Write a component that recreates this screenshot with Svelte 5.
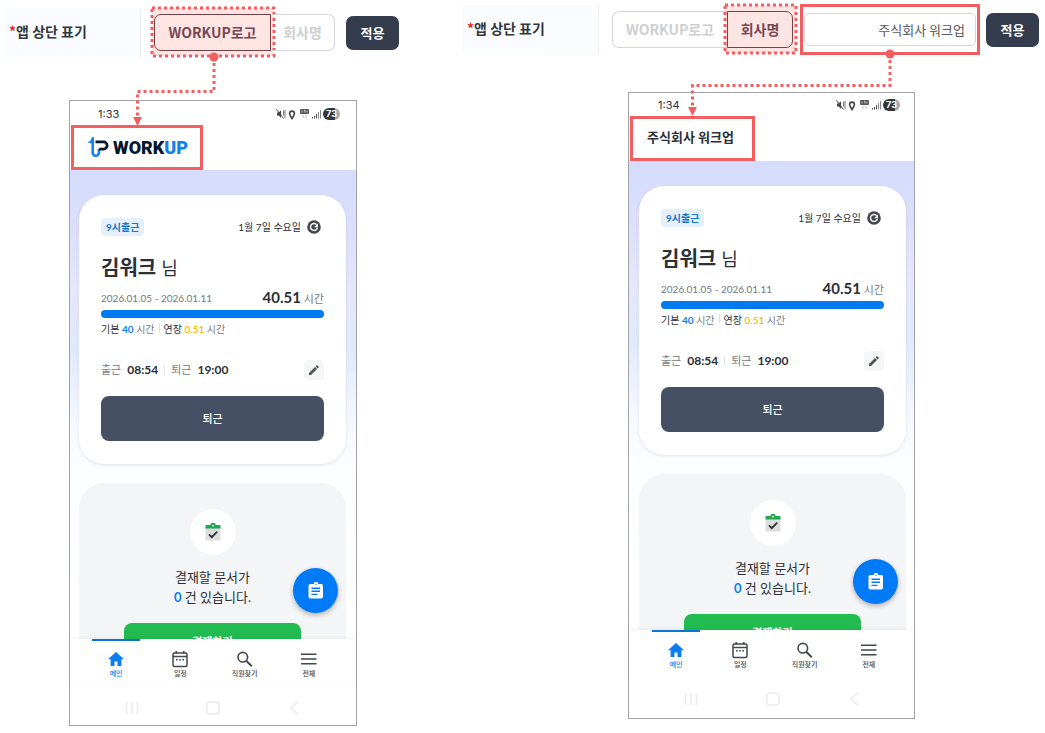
<script lang="ts">
	type Panel = {
		id: string;
		selected: 'logo' | 'name';
		time: string;
		line: string;
		dot: [number, number];
		arrow: [number, number];
	};

	const company = '주식회사 워크업';

	const panels: Panel[] = [
		{
			id: 'left',
			selected: 'logo',
			time: '1:33',
			line: 'M214 63V91.5H137.5V117',
			dot: [214, 57],
			arrow: [137.5, 117]
		},
		{
			id: 'right',
			selected: 'name',
			time: '1:34',
			line: 'M432 60V85.5H234.5V107',
			dot: [432, 54],
			arrow: [234.5, 107]
		}
	];

	const tabs = [
		{ icon: 'home', label: '메인' },
		{ icon: 'calendar', label: '일정' },
		{ icon: 'search', label: '직원찾기' },
		{ icon: 'menu', label: '전체' }
	];
</script>

{#snippet marker()}
	<svg class="marker" aria-hidden="true">
		<rect x="0" y="0" width="100%" height="100%" />
	</svg>
{/snippet}

{#snippet tabIcon(name: string)}
	<svg class="tab-icon" viewBox="0 0 18 18" aria-hidden="true">
		{#if name === 'home'}
			<path d="M9 2 1 9.2h2.6V16h3.9v-4.6h3V16h3.9V9.2H17z" fill="currentColor" />
		{:else if name === 'calendar'}
			<rect x="2" y="3" width="14" height="13.5" rx="1.5" fill="none" stroke="currentColor" stroke-width="1.5" />
			<path d="M2 6.6h14M5.2 1v2.5M12.8 1v2.5" stroke="currentColor" stroke-width="1.5" />
			<path d="M5 9.8h1.6M8.2 9.8h1.6M11.4 9.8H13" stroke="currentColor" stroke-width="1.6" />
		{:else if name === 'search'}
			<circle cx="6.8" cy="7.2" r="4.8" fill="none" stroke="currentColor" stroke-width="1.6" />
			<path d="m10.2 10.7 5.6 5.5" stroke="currentColor" stroke-width="1.9" />
		{:else}
			<path d="M1 4.3h15.500M1 9h15.500M1 13.700h15.500" stroke="currentColor" stroke-width="1.5" />
		{/if}
	</svg>
{/snippet}

{#snippet phone(panel: Panel)}
	<section class="phone">
		<div class="status">
			<span>{panel.time}</span>
			<div class="status-icons">
				<svg width="46" height="12" viewBox="0 0 46 12" aria-hidden="true">
					<path d="M1 4.5h1.600L5 2.300v7.400L2.600 7.500H1z" fill="#444" />
					<path d="m.5 1.500 7 9" stroke="#444" />
					<path d="M7.500 2.500v5M9 2v8" stroke="#666" stroke-width="0.900" />
					<path d="M16 10.500c-1.500-2.200-2.400-3.600-2.400-5a2.400 2.400 0 0 1 4.800 0c0 1.400-.9 2.800-2.400 5z" fill="none" stroke="#444" stroke-width="1.600" />
					<rect x="24" y="1" width="9" height="5" rx="1" fill="#555" />
					<path d="M26 2.500v2M28 2.500h1v2M31 2.500v2" stroke="#fff" stroke-width="0.700" fill="none" />
					<path d="M27 7v3M30 7v3" stroke="#bbb" />
					<path d="M36.500 9v1.500M38.500 8v2.500M40.500 6v4.500" stroke="#555" />
					<path d="M42.500 4v6.500M44.500 2v8.500" stroke="#888" />
				</svg>
				<span class="battery">73</span>
			</div>
		</div>

		<header class="app-bar">
			<div class="brand">
				{#if panel.selected === 'logo'}
					<svg class="logo-mark" viewBox="0 0 22 21" aria-hidden="true">
						<path d="M.3 5.800C2.800 4.800 4.300 3 4.800.3H7V6H4.200z" fill="#1480ee" />
						<path d="M5.700 3v12a3.100 3.100 0 0 0 3.100 3.700A3 3 0 0 0 11.900 15.500V12" fill="none" stroke="#1480ee" stroke-width="2.600" />
						<path d="M8.500 4.900h8a3.500 3.500 0 0 1 0 7.200h-4.400" fill="none" stroke="#06162f" stroke-width="2.700" />
					</svg>
					<span class="logo-text">WORK<b>UP</b></span>
				{:else}
					<span class="company">{company}</span>
				{/if}
			</div>
		</header>

		<div class="screen">
			<article class="card work">
				<div class="between">
					<span class="badge">9시출근</span>
					<div class="today">
						<span>1월 7일 수요일</span>
						<svg width="14" height="14" viewBox="0 0 14 14" aria-hidden="true">
							<circle cx="7" cy="7" r="6.800" fill="#43474d" />
							<path d="M9.600 4.600A3.500 3.500 0 1 0 10.400 7.800" fill="none" stroke="#fff" stroke-width="1.400" />
							<path d="M11 3.500v3.800H7.200z" fill="#fff" />
						</svg>
					</div>
				</div>

				<h2>김워크 <span>님</span></h2>

				<div class="between total">
					<span class="period">2026.01.05 - 2026.01.11</span>
					<span class="hours"><b>40.51</b> 시간</span>
				</div>
				<div class="bar"></div>
				<div class="split">
					<span>기본 <b class="blue">40</b> <i>시간</i></span>
					<span class="rule"></span>
					<span>연장 <b class="yellow">0.51</b> <i>시간</i></span>
				</div>

				<div class="between times">
					<div class="clock">
						<span>출근</span><b>08:54</b>
						<span class="rule"></span>
						<span>퇴근</span><b>19:00</b>
					</div>
					<button class="edit" aria-label="수정">
						<svg width="12" height="12" viewBox="0 0 12 12" aria-hidden="true">
							<path d="M1 11V9l6-6 2 2-6 6zM7.600 2.400 9 1l2 2-1.400 1.400z" fill="#505459" />
						</svg>
					</button>
				</div>

				<button class="leave">퇴근</button>
			</article>

			<article class="card approval">
				<div class="circle">
					<svg width="16" height="18" viewBox="0 0 16 18" aria-hidden="true">
						<rect x="0.500" y="2" width="15" height="15.500" rx="1" fill="#dcdddf" />
						<path d="M.5 5.500V3.200Q.5 2 1.700 2h3.800a2.500 2.500 0 0 1 5 0h3.800q1.200 0 1.200 1.200v2.300z" fill="#1fa94c" />
						<circle cx="8" cy="2.600" r="0.900" fill="#fff" />
						<path d="m4 11.300 2.800 2.900 5.400-5.500" fill="none" stroke="#2b2d31" stroke-width="1.700" />
					</svg>
				</div>
				<p>결재할 문서가<br /><b>0</b> 건 있습니다.</p>
				<button class="approve">결재하기</button>
			</article>

			<button class="fab" aria-label="문서">
				<svg width="18" height="18" viewBox="0 0 18 18" aria-hidden="true">
					<path d="M1.500 3.700Q1.500 2 3.200 2h3.600a2.200 2.200 0 0 1 4.400 0h3.100Q16 2 16 3.700v11.100q0 1.700-1.700 1.700H3.200q-1.700 0-1.700-1.700z" fill="#fff" />
					<circle cx="9" cy="2.300" r="0.700" fill="#007af7" />
					<path d="M4.500 6.200h8.500M4.500 9.300h8.500M4.500 12.400h6" stroke="#007af7" stroke-width="1.400" />
				</svg>
			</button>
		</div>

		<nav class="tabs">
			{#each tabs as tab, i}
				<button class="tab" class:active={i === 0}>
					{@render tabIcon(tab.icon)}
					<span>{tab.label}</span>
				</button>
			{/each}
		</nav>

		<div class="system">
			<svg viewBox="0 0 16 16" aria-hidden="true"><path d="M2.500 2v12M8 2v12M13.500 2v12" /></svg>
			<svg viewBox="0 0 16 16" aria-hidden="true"><rect x="2" y="2" width="12" height="12" rx="3" /></svg>
			<svg viewBox="0 0 16 16" aria-hidden="true"><path d="m12 1.500-7 6.500 7 6.500" /></svg>
		</div>
	</section>
{/snippet}

<main>
	{#each panels as panel}
		<div class="panel {panel.id}">
			<div class="setting">
				<div class="label" id="label-{panel.id}"><em>*</em>앱 상단 표기</div>
				<div class="segments" role="group" aria-labelledby="label-{panel.id}">
					<button class="segment" class:selected={panel.selected === 'logo'}>
						WORKUP로고
						{#if panel.selected === 'logo'}{@render marker()}{/if}
					</button>
					<button class="segment" class:selected={panel.selected === 'name'}>
						회사명
						{#if panel.selected === 'name'}{@render marker()}{/if}
					</button>
				</div>
				{#if panel.selected === 'name'}
					<div class="field">
						<input type="text" value={company} aria-label="회사명" />
					</div>
				{/if}
				<button class="apply">적용</button>
			</div>

			{@render phone(panel)}

			<svg class="connector" aria-hidden="true">
				<path d={panel.line} fill="none" stroke="#f35f60" stroke-width="3" stroke-dasharray="3 3" />
				<circle cx={panel.dot[0]} cy={panel.dot[1]} r="4.5" fill="#f35f60" />
				<path d="M{panel.arrow[0] - 4.5} {panel.arrow[1]}h9l-4.5 9z" fill="#f35f60" />
			</svg>
		</div>
	{/each}
</main>

<style>
	:global(body) {
		background: #fff;
		font-family: Lato, 'Noto Sans CJK KR', sans-serif;
		color: #2c3036;
	}

	main {
		display: grid;
		grid-template-columns: 458fr 587fr;
	}

	button {
		font-family: inherit;
		margin: 0;
		padding: 0;
		border: none;
		background: none;
		cursor: pointer;
	}

	b {
		font-weight: 700;
	}

	.panel {
		position: relative;
		padding: 7px 0 0 4px;
	}

	.panel.right {
		padding-top: 4px;
	}

	.connector {
		position: absolute;
		inset: 0;
		width: 100%;
		height: 130px;
		pointer-events: none;
	}

	/* setting row */
	.setting {
		display: flex;
		align-items: center;
		height: 51px;
		font-family: 'Noto Sans CJK KR', sans-serif;
	}

	.label {
		box-sizing: border-box;
		width: 137px;
		height: 49px;
		padding-left: 5px;
		margin-right: 13px;
		line-height: 47px;
		font-size: 14px;
		font-weight: 700;
		color: #33373d;
		background: #fafcff;
		border-right: 1px solid #eef0f3;
		white-space: nowrap;
	}

	.label em {
		font-style: normal;
		color: #d92b2b;
	}

	.segments {
		display: flex;
		height: 37px;
	}

	.segment {
		position: relative;
		box-sizing: border-box;
		width: 66px;
		padding-bottom: 2px;
		font-size: 14px;
		font-weight: 700;
		color: #cdcfd1;
		border: 1px solid #d3d5d7;
		border-left: none;
		border-radius: 0 7px 7px 0;
	}

	.segment:first-child {
		width: 115px;
		border-left: 1px solid #d3d5d7;
		border-right: none;
		border-radius: 7px 0 0 7px;
	}

	.segment.selected,
	.segment:first-child.selected {
		border: 1px solid #5a4048;
		color: #5c4656;
	}

	.segment:first-child.selected {
		width: 117px;
	}

	.segment:first-child.selected + .segment {
		width: 64px;
	}

	.marker {
		position: absolute;
		top: -7px;
		left: -3px;
		width: calc(100% + 7px);
		height: calc(100% + 13px);
		overflow: visible;
		pointer-events: none;
	}

	.marker rect {
		fill: rgb(255 90 90 / 0.16);
		stroke: #f35f60;
		stroke-width: 3px;
		stroke-dasharray: 3 3;
	}

	.field {
		box-sizing: border-box;
		flex: 0 1 180px;
		height: 51px;
		margin: 0 -5px 0 7px;
		padding: 6px 1px;
		border: 3px solid #f35f60;
	}

	.field input {
		box-sizing: border-box;
		width: 100%;
		height: 33px;
		padding: 0 10px 1px;
		border: 1px solid #d3d7da;
		border-radius: 5px;
		text-align: right;
		font-family: inherit;
		font-size: 13px;
		color: #555a60;
		background: #fff;
	}

	.apply {
		width: 53px;
		height: 34px;
		margin-left: 11px;
		padding-bottom: 1px;
		border-radius: 7px;
		background: #343c4e;
		color: #fff;
		font-size: 13px;
		font-weight: 700;
	}

	/* phone */
	.phone {
		box-sizing: border-box;
		width: 288px;
		margin: 42px 0 0 65px;
		border: 1px solid #a3a3a5;
		background: #fff;
	}

	.right .phone {
		width: 287px;
		margin: 37px 0 0 166px;
	}

	.status {
		display: flex;
		justify-content: space-between;
		box-sizing: border-box;
		height: 24px;
		padding: 3px 16px 0 28px;
		font-family: Inter, sans-serif;
		font-size: 11px;
		line-height: 20px;
	}

	.right .status {
		height: 23px;
		padding: 2px 14px 0 29px;
	}

	.status-icons {
		display: flex;
		align-items: center;
		height: 20px;
		gap: 1px;
	}

	.battery {
		width: 17px;
		height: 12px;
		border-radius: 6px;
		background: linear-gradient(90deg, #35373a 73%, #a6a8aa 73%);
		color: #fff;
		font-size: 9px;
		font-weight: 700;
		line-height: 12px;
		text-align: center;
	}

	.brand {
		box-sizing: border-box;
		display: flex;
		align-items: center;
		gap: 4px;
		width: 132px;
		height: 45px;
		margin-left: 1px;
		padding-left: 13px;
		border: 3px solid #f35f60;
		white-space: nowrap;
	}

	.right .brand {
		width: 125px;
		padding: 0 0 3px 14px;
	}

	.logo-mark {
		width: 22px;
		height: 21px;
	}

	.logo-text {
		font-family: Roboto, sans-serif;
		font-size: 18px;
		font-weight: 900;
		line-height: 20px;
		color: #06162f;
	}

	.logo-text b {
		font-weight: 900;
		color: #1480ee;
	}

	.company {
		font-size: 13px;
		font-weight: 600;
		line-height: 20px;
	}

	.screen {
		position: relative;
		box-sizing: border-box;
		height: 469px;
		padding: 25px 10px 0 9px;
		overflow: hidden;
		background: linear-gradient(#d5dcfd 0, #dcdffc 60px, #e6e7fc 120px, #e0eafd 180px, #f5f8ff 250px, #fcfdff 300px, #fff 100%);
	}

	.right .screen {
		padding: 25px 8px 0 10px;
	}

	.card {
		box-sizing: border-box;
		border-radius: 25px;
	}

	.work {
		height: 269px;
		padding: 22px 22px 0;
		background: #fff;
		box-shadow: 0 1px 3px rgb(60 80 130 / 0.15);
	}

	.between {
		display: flex;
		align-items: center;
		justify-content: space-between;
	}

	.badge {
		height: 18px;
		padding: 0 5px;
		border-radius: 4px;
		background: #e4f1fd;
		color: #1b78ce;
		font-size: 10px;
		font-weight: 700;
		line-height: 18px;
	}

	.today {
		display: flex;
		align-items: center;
		gap: 6px;
		padding-right: 3px;
		font-size: 10px;
		line-height: 20px;
	}

	h2 {
		margin: 14px 0 0;
		font-size: 20px;
		font-weight: 600;
		line-height: 32px;
	}

	h2 span {
		font-weight: 400;
		font-size: 18px;
	}

	.total {
		height: 20px;
		margin-top: 4px;
	}

	.period {
		font-size: 10px;
		line-height: 20px;
		color: #73777c;
	}

	.hours {
		font-size: 11px;
		line-height: 20px;
		color: #777b80;
	}

	.hours b {
		font-size: 15px;
		color: #2c3036;
	}

	.bar {
		height: 8px;
		margin-top: 2px;
		border-radius: 4px;
		background: #007af3;
	}

	.split {
		display: flex;
		align-items: center;
		gap: 4px;
		height: 20px;
		font-size: 10px;
		white-space: nowrap;
	}

	.split i {
		font-style: normal;
		color: #777b80;
	}

	.rule {
		width: 1px;
		height: 10px;
		background: #dfe1e3;
	}

	.blue {
		color: #0a7df0;
	}

	.yellow {
		color: #f5bf15;
	}

	.times {
		height: 20px;
		margin-top: 22px;
	}

	.clock {
		display: flex;
		align-items: center;
		gap: 6px;
		font-size: 11px;
		line-height: 20px;
		color: #777b80;
	}

	.clock b {
		font-size: 12px;
		color: #2c3036;
	}

	.edit {
		display: grid;
		place-items: center;
		width: 20px;
		height: 20px;
		border-radius: 4px;
		background: #f5f6f6;
	}

	.leave {
		width: 100%;
		height: 45px;
		margin-top: 16px;
		padding-bottom: 2px;
		border-radius: 8px;
		background: #465064;
		color: #fff;
		font-size: 11px;
		font-weight: 500;
	}

	.approval {
		display: flex;
		flex-direction: column;
		align-items: center;
		height: 240px;
		margin-top: 19px;
		padding-top: 26px;
		background: #f4f5f7;
	}

	.circle {
		display: grid;
		place-items: center;
		width: 46px;
		height: 46px;
		border-radius: 50%;
		background: #fff;
	}

	.approval p {
		margin: 12px 0 16px;
		font-size: 13px;
		line-height: 20px;
		text-align: center;
	}

	.approval p b {
		color: #0a7df0;
	}

	.approve {
		width: 177px;
		height: 36px;
		border-radius: 8px;
		background: #22bb4f;
		color: #fff;
		font-size: 11px;
		font-weight: 700;
	}

	.fab {
		position: absolute;
		right: 18px;
		bottom: 26px;
		display: grid;
		place-items: center;
		width: 45px;
		height: 45px;
		border-radius: 50%;
		background: #007af7;
		box-shadow: 0 2px 5px rgb(0 0 0 / 0.3);
	}

	.right .fab {
		right: 16px;
	}

	.tabs {
		position: relative;
		display: grid;
		grid-template-columns: repeat(4, 1fr);
		padding: 0 15px 0 14px;
		box-shadow: 0 -1px 3px rgb(0 0 0 / 0.06);
	}

	.right .tabs {
		padding: 0 13px 0 15px;
	}

	.tab {
		display: flex;
		flex-direction: column;
		align-items: center;
		height: 46px;
		padding-top: 11px;
		color: #43474d;
		font-size: 7px;
		font-weight: 500;
		line-height: 10px;
	}

	.tab.active {
		color: #0a7df0;
		background: linear-gradient(#0a74dc, #0a74dc) center top / 48px 2px no-repeat;
	}

	.tab-icon {
		width: 18px;
		height: 18px;
	}

	.system {
		display: flex;
		justify-content: space-between;
		padding: 15px 54px 9px;
	}

	.right .system {
		padding: 15px 52px 11px 54px;
	}

	.system svg {
		width: 16px;
		height: 16px;
		fill: none;
		stroke: #ececee;
		stroke-width: 1.5px;
	}
</style>
